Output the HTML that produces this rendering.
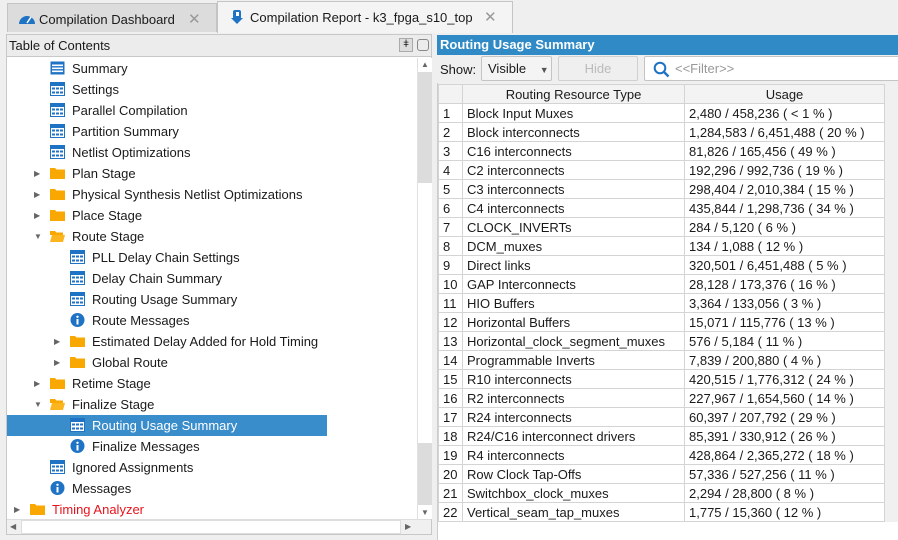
<!DOCTYPE html>
<html><head><meta charset="utf-8"><style>
*{box-sizing:border-box;margin:0;padding:0}
body{width:898px;height:540px;overflow:hidden;background:#efefef;font-family:"Liberation Sans","DejaVu Sans",sans-serif;font-size:13px;color:#1a1a1a;position:relative}
.abs{position:absolute}
.tab1{left:7px;top:3px;width:210px;height:29px;background:#dcdcdc;border:1px solid #c4c4c4;border-bottom:none}
.tab2{left:217px;top:1px;width:296px;height:32px;background:#f4f4f4;border:1px solid #c4c4c4;border-bottom:none}
.tabtxt{position:absolute;top:8px;font-size:13px}
.x{position:absolute;top:6px;color:#999;font-size:15px;font-weight:bold}
.left{left:6px;top:34px;width:426px;height:501px;border:1px solid #c8c8c8;background:#fff}
.lhead{position:absolute;left:0;top:0;width:424px;height:22px;background:#ececec;border-bottom:1px solid #c8c8c8}
.row{position:absolute;height:21px;line-height:21px;white-space:nowrap}
.ic{position:absolute;top:3px;width:15px;height:14px}
.arr{position:absolute;top:0;font-size:8px;color:#666}
.sel{background:#3a8dcb;color:#fff}
table{border-collapse:collapse;position:absolute;left:438px;top:84px;background:#fff}
td{border:1px solid #d4d4d4;height:19px;padding:0 4px;line-height:17px;white-space:nowrap}
th{border:1px solid #d4d4d4;height:19px;font-weight:normal;background:#f3f3f3}
</style></head><body>
<div class="abs tab1"><svg class="abs" style="left:10px;top:8px" width="18" height="14" viewBox="0 0 18 14"><path d="M1 12 A8 8 0 0 1 17 12 Z" fill="#1f73c4"/><path d="M9 11 L13 5" stroke="#fff" stroke-width="1.5"/></svg><span class="tabtxt" style="left:31px">Compilation Dashboard</span><span class="x" style="left:180px">✕</span></div>
<div class="abs tab2"><svg class="abs" style="left:11px;top:7px" width="16" height="17" viewBox="0 0 16 17"><path d="M2 9 L8 15 L14 9 Z" fill="#1f73c4"/><rect x="4" y="1" width="8" height="9" rx="2" fill="#1f73c4"/><rect x="7" y="3" width="3" height="4" fill="#fff"/></svg><span class="tabtxt" style="left:32px">Compilation Report - k3_fpga_s10_top</span><span class="x" style="left:266px">✕</span></div>

<div class="abs left">
<div class="lhead"><span style="position:absolute;left:2px;top:3px">Table of Contents</span>
<div style="position:absolute;left:392px;top:3px;width:14px;height:14px;border:1px solid #aaa;background:#ddd;font-size:10px;text-align:center;line-height:12px">ǂ</div>
<div style="position:absolute;left:410px;top:4px;width:12px;height:12px;border:1px solid #888;border-radius:3px"></div></div>
<div style="position:absolute;left:410px;top:23px;width:15px;height:461px;background:#fff;border-left:1px solid #e0e0e0">
<div style="position:absolute;left:0;top:14px;width:14px;height:111px;background:#dcdcdc"></div>
<div style="position:absolute;left:0;top:385px;width:14px;height:62px;background:#dcdcdc"></div>
<div style="position:absolute;left:3px;top:2px;font-size:8px;color:#666">▲</div>
<div style="position:absolute;left:3px;top:450px;font-size:8px;color:#666">▼</div></div>
<div style="position:absolute;left:0;top:484px;width:424px;height:15px;background:#f0f0f0;border-top:1px solid #ddd">
<div style="position:absolute;left:14px;top:0;width:380px;height:14px;background:#fff;border:1px solid #ddd"></div>
<div style="position:absolute;left:3px;top:2px;font-size:8px;color:#666">◀</div>
<div style="position:absolute;left:398px;top:2px;font-size:8px;color:#666">▶</div></div>
</div>

<svg width="0" height="0" style="position:absolute"><defs>
<symbol id="tb" viewBox="0 0 15 14"><rect x="0.5" y="0.5" width="14" height="13" fill="#fff" stroke="#1f73c4"/><rect x="0" y="0" width="15" height="4" fill="#1f73c4"/><g fill="#1f73c4"><rect x="2" y="5.5" width="3" height="2"/><rect x="6" y="5.5" width="3" height="2"/><rect x="10" y="5.5" width="3" height="2"/><rect x="2" y="9.5" width="3" height="2"/><rect x="6" y="9.5" width="3" height="2"/><rect x="10" y="9.5" width="3" height="2"/></g></symbol>
<symbol id="sm" viewBox="0 0 15 14"><rect x="0.5" y="0.5" width="14" height="13" fill="#1f73c4"/><rect x="2" y="3.5" width="11" height="1.6" fill="#fff"/><rect x="2" y="6.5" width="11" height="1.6" fill="#fff"/><rect x="2" y="9.5" width="11" height="1.6" fill="#fff"/></symbol>
<symbol id="inf" viewBox="0 0 15 14"><circle cx="7.5" cy="7" r="7" fill="#1f73c4"/><rect x="6.5" y="6" width="2" height="5.5" fill="#fff"/><circle cx="7.5" cy="3.8" r="1.2" fill="#fff"/></symbol>
<symbol id="fd" viewBox="0 0 15 14"><path d="M0 2 H5 L6.5 3.5 H15 V13 H0 Z" fill="#f8a800"/></symbol>
<symbol id="fo" viewBox="0 0 15 14"><path d="M0 2 H5 L6.5 3.5 H13 V6 H0 Z" fill="#f8a800"/><path d="M0 13 L2 6 H15 L13 13 Z" fill="#fbb51e"/></symbol>
</defs></svg>

<div class="row" style="top:58px;left:50px"><svg class="ic" style="left:0"><use href="#sm"/></svg><span style="margin-left:22px">Summary</span></div>
<div class="row" style="top:79px;left:50px"><svg class="ic"><use href="#tb"/></svg><span style="margin-left:22px">Settings</span></div>
<div class="row" style="top:100px;left:50px"><svg class="ic"><use href="#tb"/></svg><span style="margin-left:22px">Parallel Compilation</span></div>
<div class="row" style="top:121px;left:50px"><svg class="ic"><use href="#tb"/></svg><span style="margin-left:22px">Partition Summary</span></div>
<div class="row" style="top:142px;left:50px"><svg class="ic"><use href="#tb"/></svg><span style="margin-left:22px">Netlist Optimizations</span></div>
<div class="row" style="top:163px;left:34px"><span class="arr">▶</span><svg class="ic" style="left:16px"><use href="#fd"/></svg><span style="margin-left:38px">Plan Stage</span></div>
<div class="row" style="top:184px;left:34px"><span class="arr">▶</span><svg class="ic" style="left:16px"><use href="#fd"/></svg><span style="margin-left:38px">Physical Synthesis Netlist Optimizations</span></div>
<div class="row" style="top:205px;left:34px"><span class="arr">▶</span><svg class="ic" style="left:16px"><use href="#fd"/></svg><span style="margin-left:38px">Place Stage</span></div>
<div class="row" style="top:226px;left:34px"><span class="arr">▼</span><svg class="ic" style="left:16px"><use href="#fo"/></svg><span style="margin-left:38px">Route Stage</span></div>
<div class="row" style="top:247px;left:70px"><svg class="ic"><use href="#tb"/></svg><span style="margin-left:22px">PLL Delay Chain Settings</span></div>
<div class="row" style="top:268px;left:70px"><svg class="ic"><use href="#tb"/></svg><span style="margin-left:22px">Delay Chain Summary</span></div>
<div class="row" style="top:289px;left:70px"><svg class="ic"><use href="#tb"/></svg><span style="margin-left:22px">Routing Usage Summary</span></div>
<div class="row" style="top:310px;left:70px"><svg class="ic"><use href="#inf"/></svg><span style="margin-left:22px">Route Messages</span></div>
<div class="row" style="top:331px;left:54px"><span class="arr">▶</span><svg class="ic" style="left:16px"><use href="#fd"/></svg><span style="margin-left:38px">Estimated Delay Added for Hold Timing</span></div>
<div class="row" style="top:352px;left:54px"><span class="arr">▶</span><svg class="ic" style="left:16px"><use href="#fd"/></svg><span style="margin-left:38px">Global Route</span></div>
<div class="row" style="top:373px;left:34px"><span class="arr">▶</span><svg class="ic" style="left:16px"><use href="#fd"/></svg><span style="margin-left:38px">Retime Stage</span></div>
<div class="row" style="top:394px;left:34px"><span class="arr">▼</span><svg class="ic" style="left:16px"><use href="#fo"/></svg><span style="margin-left:38px">Finalize Stage</span></div>
<div class="row sel" style="top:415px;left:7px;width:320px"><svg class="ic" style="left:63px"><use href="#tb"/></svg><span style="margin-left:85px">Routing Usage Summary</span></div>
<div class="row" style="top:436px;left:70px"><svg class="ic"><use href="#inf"/></svg><span style="margin-left:22px">Finalize Messages</span></div>
<div class="row" style="top:457px;left:50px"><svg class="ic"><use href="#tb"/></svg><span style="margin-left:22px">Ignored Assignments</span></div>
<div class="row" style="top:478px;left:50px"><svg class="ic"><use href="#inf"/></svg><span style="margin-left:22px">Messages</span></div>
<div class="row" style="top:499px;left:14px"><span class="arr">▶</span><svg class="ic" style="left:16px"><use href="#fd"/></svg><span style="margin-left:38px;color:#e8141c">Timing Analyzer</span></div>

<div class="abs" style="left:437px;top:35px;width:461px;height:20px;background:#2f8ac6;color:#fff;font-weight:bold;line-height:19px;padding-left:3px">Routing Usage Summary</div>
<div class="abs" style="left:440px;top:62px">Show:</div>
<div class="abs" style="left:481px;top:56px;width:71px;height:25px;border:1px solid #c4c4c4;border-radius:2px;background:#f4f4f4;line-height:23px;padding-left:6px">Visible <span style="font-size:9px;color:#555;margin-left:10px">▼</span></div>
<div class="abs" style="left:558px;top:56px;width:80px;height:25px;border:1px solid #d0d0d0;border-radius:2px;background:#efefef;color:#bbb;text-align:center;line-height:23px">Hide</div>
<div class="abs" style="left:644px;top:56px;width:260px;height:25px;border:1px solid #c4c4c4;border-radius:2px;background:#fff;line-height:23px;padding-left:30px;color:#999">&lt;&lt;Filter&gt;&gt;
<svg class="abs" style="left:8px;top:4px" width="17" height="17" viewBox="0 0 17 17"><circle cx="7" cy="7" r="5.3" fill="none" stroke="#1f73c4" stroke-width="2"/><path d="M11 11 L15.5 15.5" stroke="#1f73c4" stroke-width="2.4"/></svg></div>
<div class="abs" style="left:437px;top:83px;width:461px;height:457px;background:#f0f0f0;border-left:1px solid #ccc"><div style="position:absolute;left:0;top:439px;width:460px;height:18px;background:#fff"></div></div>
<table>
<tr><th style="width:24px"></th><th style="width:222px">Routing Resource Type</th><th style="width:200px">Usage</th></tr>
<tr><td>1</td><td>Block Input Muxes</td><td>2,480 / 458,236 ( &lt; 1 % )</td></tr>
<tr><td>2</td><td>Block interconnects</td><td>1,284,583 / 6,451,488 ( 20 % )</td></tr>
<tr><td>3</td><td>C16 interconnects</td><td>81,826 / 165,456 ( 49 % )</td></tr>
<tr><td>4</td><td>C2 interconnects</td><td>192,296 / 992,736 ( 19 % )</td></tr>
<tr><td>5</td><td>C3 interconnects</td><td>298,404 / 2,010,384 ( 15 % )</td></tr>
<tr><td>6</td><td>C4 interconnects</td><td>435,844 / 1,298,736 ( 34 % )</td></tr>
<tr><td>7</td><td>CLOCK_INVERTs</td><td>284 / 5,120 ( 6 % )</td></tr>
<tr><td>8</td><td>DCM_muxes</td><td>134 / 1,088 ( 12 % )</td></tr>
<tr><td>9</td><td>Direct links</td><td>320,501 / 6,451,488 ( 5 % )</td></tr>
<tr><td>10</td><td>GAP Interconnects</td><td>28,128 / 173,376 ( 16 % )</td></tr>
<tr><td>11</td><td>HIO Buffers</td><td>3,364 / 133,056 ( 3 % )</td></tr>
<tr><td>12</td><td>Horizontal Buffers</td><td>15,071 / 115,776 ( 13 % )</td></tr>
<tr><td>13</td><td>Horizontal_clock_segment_muxes</td><td>576 / 5,184 ( 11 % )</td></tr>
<tr><td>14</td><td>Programmable Inverts</td><td>7,839 / 200,880 ( 4 % )</td></tr>
<tr><td>15</td><td>R10 interconnects</td><td>420,515 / 1,776,312 ( 24 % )</td></tr>
<tr><td>16</td><td>R2 interconnects</td><td>227,967 / 1,654,560 ( 14 % )</td></tr>
<tr><td>17</td><td>R24 interconnects</td><td>60,397 / 207,792 ( 29 % )</td></tr>
<tr><td>18</td><td>R24/C16 interconnect drivers</td><td>85,391 / 330,912 ( 26 % )</td></tr>
<tr><td>19</td><td>R4 interconnects</td><td>428,864 / 2,365,272 ( 18 % )</td></tr>
<tr><td>20</td><td>Row Clock Tap-Offs</td><td>57,336 / 527,256 ( 11 % )</td></tr>
<tr><td>21</td><td>Switchbox_clock_muxes</td><td>2,294 / 28,800 ( 8 % )</td></tr>
<tr><td>22</td><td>Vertical_seam_tap_muxes</td><td>1,775 / 15,360 ( 12 % )</td></tr>
</table>
</body></html>
